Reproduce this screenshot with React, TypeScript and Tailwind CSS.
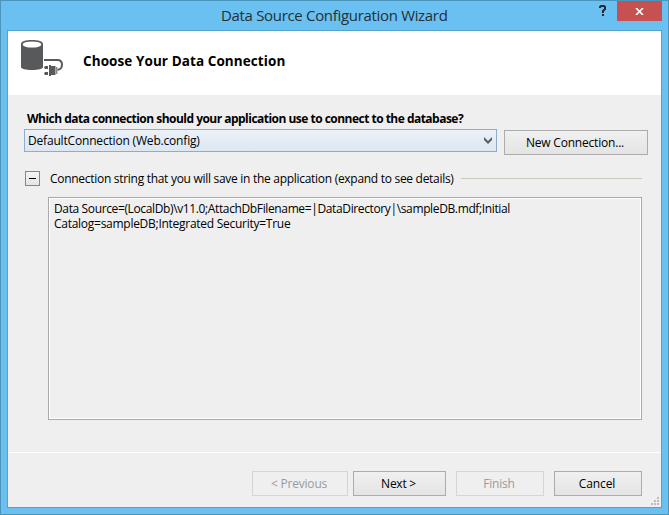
import type { ReactNode } from "react";

function DialogButton({ children, className, disabled = false }: { children: ReactNode; className: string; disabled?: boolean }) {
  return (
    <button
      type="button"
      disabled={disabled}
      className={`flex h-[25px] shrink-0 items-center justify-center border pr-[2px] whitespace-nowrap ${
        disabled
          ? "border-[#d5d5d5] bg-[#efefef] text-[#9b9b9b]"
          : "border-[#acacac] bg-linear-to-b from-[#f0f0f0] to-[#e4e4e4] text-black"
      } ${className}`}
    >
      {children}
    </button>
  );
}

function DatabaseIcon() {
  return (
    <svg width="44" height="38" viewBox="0 0 44 38" className="block shrink-0">
      <path d="M1 4C1 1.3 5.7 0 12 0S23 1.3 23 4V27C23 29 18.3 30 12 30S1 29 1 27Z" fill="#58595b" />
      <ellipse cx="12" cy="4.5" rx="9.4" ry="3.1" fill="#fff" />
      <path d="M24 20H37.5C40.8 20 42 22 42 24.6S40.5 29.8 37.5 29.8" fill="none" stroke="#58595b" strokeWidth="2" />
      <path d="M25 26H28V29H25L24 27.5ZM25 32H28V35H25L24 33.5ZM29 25H31V36H29ZM31 26H35.5V35H31ZM36.3 27H37.3V34H36.3Z" fill="#58595b" />
    </svg>
  );
}

export default function App() {
  return (
    <div className="flex h-[515px] w-[669px] flex-col overflow-hidden border border-[#4b95bb] bg-[#69c0f1] font-['Open_Sans','Noto_Sans',sans-serif] text-[12px] leading-[15px] text-black">
      <header className="flex h-[29px] shrink-0 items-start">
        <div className="w-[220px]" />
        <h1 className="w-[370px] pt-[4px] text-[15px] leading-5 tracking-[-0.32px] whitespace-nowrap text-[#262f36]">
          Data Source Configuration Wizard
        </h1>
        <button type="button" aria-label="Help" className="flex h-5 w-[24px] items-center justify-center">
          <svg width="8" height="12" viewBox="0 0 8 12">
            <path d="M1 3V2L2 1H5L6 2V4L4 6V8" fill="none" stroke="#222b31" strokeWidth="2" />
            <path d="M3 9H5V11H3Z" fill="#222b31" />
          </svg>
        </button>
        <button type="button" aria-label="Close" className="ml-[2px] flex h-5 w-[45px] items-center justify-center bg-[#c75050]">
          <svg width="9" height="7" viewBox="0 0 9 7">
            <path d="M1 0L8 7M8 0L1 7" stroke="#fff" strokeWidth="1.7" />
          </svg>
        </button>
      </header>

      <main className="mx-[6px] flex h-[478px] w-[655px] shrink-0 flex-col border border-[#55a2cc] bg-[#efefef]">
        <section className="flex h-16 shrink-0 items-start bg-white pt-[9px] pl-3">
          <DatabaseIcon />
          <h2 className="mt-3 ml-[19px] text-[13.5px] leading-[18px] font-bold tracking-[0.08px] whitespace-nowrap">
            Choose Your Data Connection
          </h2>
        </section>

        <section className="flex h-[357px] shrink-0 flex-col pr-[13px] pl-4">
          <p className="mt-[16px] ml-[3px] h-[18px] text-[12px] leading-[15px] font-bold tracking-[-0.52px] whitespace-nowrap">
            Which data connection should your application use to connect to the database?
          </p>
          <div className="flex items-start">
            <div className="flex h-[23px] w-[473px] items-center justify-between border border-[#8eacd0] bg-linear-to-b from-[#ebf1f7] to-[#dce7f2] pr-[4px] pl-[3px]">
              <span className="tracking-[-0.18px]">DefaultConnection (Web.config)</span>
              <svg width="8" height="7" viewBox="0 0 8 7">
                <path d="M0 0L4 4L8 0V3L4 7L0 3Z" fill="#5a5f63" />
              </svg>
            </div>
            <DialogButton className="mt-px ml-[7px] w-36 tracking-[-0.2px]">New Connection...</DialogButton>
          </div>

          <div className="mt-[16px] ml-px flex h-[15px] items-center">
            <button type="button" aria-label="Collapse" className="flex size-[15px] items-center justify-center border border-[#3399ff] bg-linear-to-b from-[#f3f3f3] to-[#e5e5e5]">
              <span className="h-px w-[7px] bg-black" />
            </button>
            <span className="ml-[10px] w-[411px] tracking-[-0.29px] whitespace-nowrap">
              Connection string that you will save in the application (expand to see details)
            </span>
            <span className="h-px w-[181px] bg-[#c9c9bf]" />
          </div>

          <div className="mt-[11px] ml-6 h-[223px] w-[594px] border border-[#a9a9ad] bg-[#efefef]">
            <div className="h-full border border-white pt-[2px] pl-1 tracking-[-0.27px] whitespace-nowrap">
              <span className="tracking-[-0.37px]">
                Data Source=(LocalDb)\v11.0;AttachDbFilename=|DataDirectory|\sampleDB.mdf;Initial
              </span>
              <br />
              Catalog=sampleDB;Integrated Security=True
            </div>
          </div>
        </section>

        <footer className="relative flex grow border-t border-white pt-[18px] pl-[244px]">
          <DialogButton disabled className="w-24 tracking-[-0.2px]">&lt; Previous</DialogButton>
          <DialogButton className="ml-[5px] w-[93px] tracking-[-0.25px]">Next &gt;</DialogButton>
          <DialogButton disabled className="ml-[10px] w-[88px] tracking-[-0.2px]">Finish</DialogButton>
          <DialogButton className="ml-[10px] w-[88px] tracking-[-0.1px]">Cancel</DialogButton>
          <svg width="8" height="8" viewBox="0 0 8 8" className="absolute right-[2px] bottom-[2px]">
            <path d="M6 0H8V2H6ZM3 3H5V5H3ZM6 3H8V5H6ZM0 6H2V8H0ZM3 6H5V8H3ZM6 6H8V8H6Z" fill="#bcbcbc" />
          </svg>
        </footer>
      </main>
    </div>
  );
}
